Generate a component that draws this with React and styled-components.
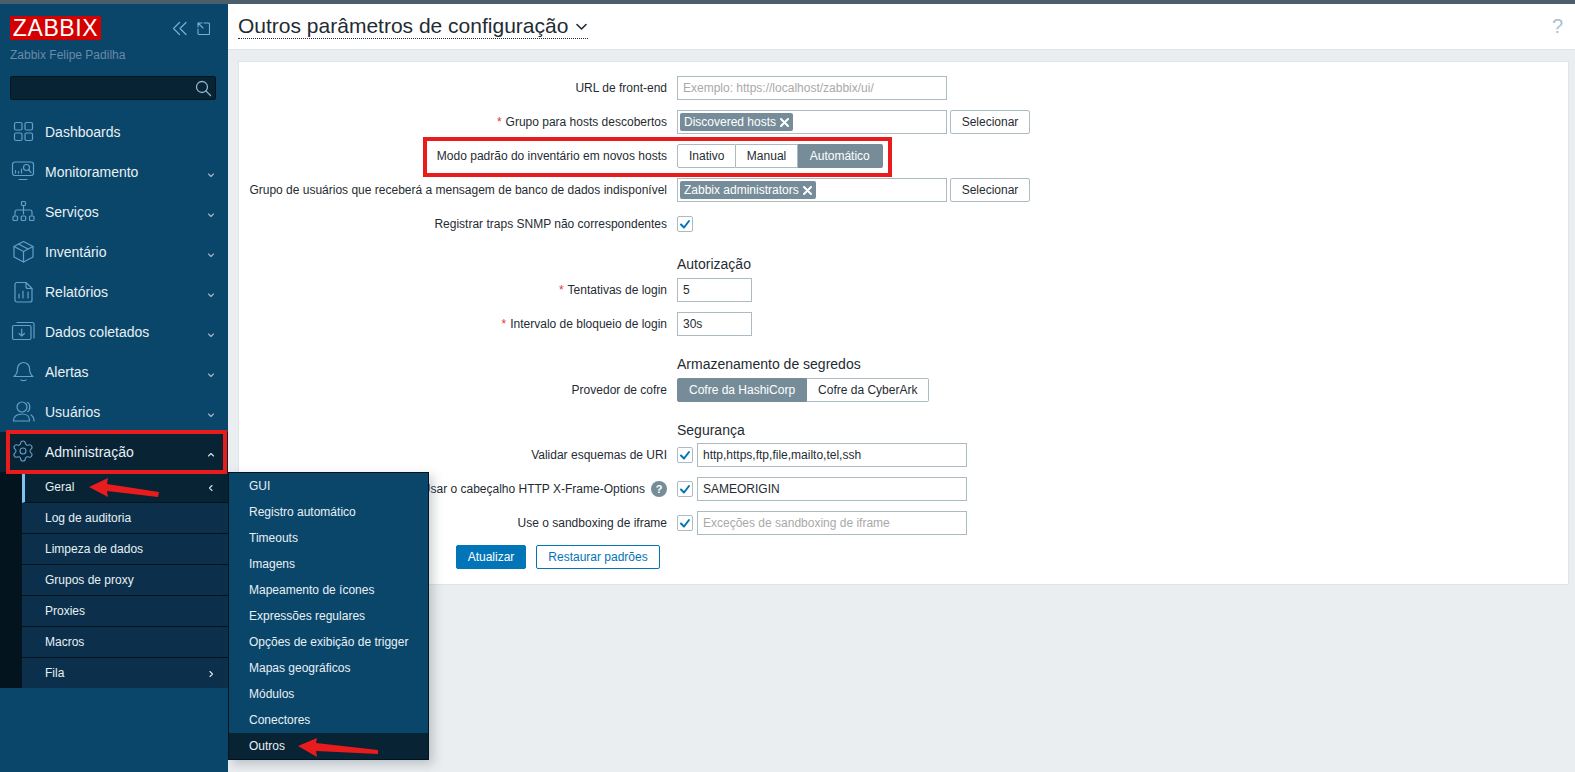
import React from 'react'
import styled, { createGlobalStyle } from 'styled-components'
import { Settings } from 'lucide-react'

const GlobalStyle = createGlobalStyle`
  html, body {
    margin: 0;
    padding: 0;
    height: 100%;
    overflow: hidden;
    background: #ebeef0;
    font-family: "Liberation Sans", Arial, sans-serif;
    font-size: 12px;
    color: #1f2c33;
  }
  * { box-sizing: border-box; }
`

const Page = styled.div`
  position: relative;
  width: 1575px;
  height: 772px;
  overflow: hidden;
  display: flex;
  flex-direction: column;
`

const TopStrip = styled.div`
  height: 4px;
  flex: none;
  background: #4b5e69;
`

const Body = styled.div`
  flex: 1;
  display: flex;
  min-height: 0;
`

const Sidebar = styled.aside`
  position: relative;
  width: 228px;
  flex: none;
  background: #0a466a;
  padding-top: 12px;
`

const BrandRow = styled.div`
  display: flex;
  align-items: center;
  justify-content: space-between;
  padding: 0 18px 0 10px;
`

const Logo = styled.div`
  width: 91px;
  height: 24px;
  background: #d40000;
  color: #fff;
  font-size: 23px;
  line-height: 25px;
  letter-spacing: 0.6px;
  text-align: center;
  overflow: hidden;
`

const BrandTools = styled.div`
  display: flex;
  align-items: center;
  gap: 10px;
  color: #6fb0dc;
`

const ServerName = styled.div`
  margin: 8px 0 0 10px;
  font-size: 12px;
  color: #6b8aa6;
`

const SearchBox = styled.div`
  display: flex;
  align-items: center;
  justify-content: flex-end;
  height: 24px;
  margin: 14px 12px 0 10px;
  padding-right: 3px;
  background: #072334;
  border: 1px solid #04141f;
  border-radius: 2px;
  color: #8fb4cf;
`

const Menu = styled.nav`
  margin-top: 12px;
`

const MenuItem = styled.div`
  position: relative;
  display: flex;
  align-items: center;
  height: 40px;
  padding-left: 45px;
  font-size: 14px;
  color: #e8f0f5;
  background: ${p => (p.$active ? '#072334' : 'transparent')};
`

const MenuIcon = styled.span`
  position: absolute;
  left: 11px;
  top: 8px;
  width: 24px;
  height: 24px;
  color: #629fcb;
`

const GearIcon = styled(Settings)`
  display: block;
  margin-top: -1px;
`

const Caret = styled.span`
  position: absolute;
  right: 12px;
  top: 50%;
  margin-top: -5px;
  width: 10px;
  height: 10px;
  color: ${p => (p.$light ? '#dbe6ee' : '#9db9cd')};
`

const SubWrap = styled.div`
  background: #04141f;
  padding-left: 22px;
`

const SubItem = styled.div`
  position: relative;
  display: flex;
  align-items: center;
  height: 31px;
  font-size: 12px;
  color: #e8f0f5;
  background: ${p => (p.$active ? '#072334' : '#0c304b')};
  border-bottom: 1px solid #04141f;
  border-left: ${p => (p.$active ? '3px solid #7fc4f0' : '0')};
  padding-left: ${p => (p.$active ? '20px' : '23px')};

  &:last-child {
    height: 30px;
    border-bottom: 0;
  }
`

const Flyout = styled.div`
  position: absolute;
  left: 228px;
  top: 472px;
  width: 201px;
  background: #0a466a;
  border: 1px solid #04141f;
  box-shadow: 4px 4px 10px rgba(40, 60, 75, 0.25);
  z-index: 3;
`

const FlyoutItem = styled.div`
  display: flex;
  align-items: center;
  height: 26px;
  padding-left: 20px;
  font-size: 12px;
  color: #e8f0f5;
  background: ${p => (p.$active ? '#072334' : 'transparent')};
`

const Main = styled.main`
  flex: 1;
  min-width: 0;
  display: flex;
  flex-direction: column;
`

const Header = styled.header`
  height: 46px;
  flex: none;
  display: flex;
  align-items: center;
  justify-content: space-between;
  padding: 0 12px 0 10px;
  background: #fff;
  border-bottom: 1px solid #dfe4e7;
`

const Title = styled.h1`
  display: flex;
  align-items: center;
  gap: 7px;
  margin: 0;
  font-size: 21px;
  font-weight: normal;
  line-height: 24px;
  color: #1f2c33;
  border-bottom: 1px dotted #1f2c33;
`

const HelpMark = styled.span`
  font-size: 20px;
  color: #a9c0cf;
`

const Card = styled.section`
  margin: 11px 6px 0 10px;
  padding: 14px 0 15px;
  background: #fff;
  border: 1px solid #dfe4e7;
`

const Row = styled.div`
  display: grid;
  grid-template-columns: 428px 1fr;
  column-gap: 10px;
  align-items: center;
  min-height: 24px;
  margin-bottom: 10px;
`

const Label = styled.label`
  display: flex;
  align-items: center;
  justify-content: flex-end;
  white-space: nowrap;
  text-align: right;
  color: #1f2c33;
`

const Star = styled.span`
  color: #e33734;
  margin-right: 4px;
`

const Control = styled.div`
  display: flex;
  align-items: center;
  gap: ${p => p.$gap ?? 3}px;
`

const Input = styled.div`
  display: flex;
  align-items: center;
  width: ${p => p.$w}px;
  height: 24px;
  padding: 0 5px;
  border: 1px solid #acbbc2;
  color: ${p => (p.$ph ? '#a9a9a9' : '#1f2c33')};
`

const TagBox = styled.div`
  display: flex;
  align-items: center;
  width: 270px;
  height: 24px;
  padding: 0 2px;
  border: 1px solid #acbbc2;
`

const Tag = styled.span`
  display: inline-flex;
  align-items: center;
  gap: 4px;
  height: 18px;
  padding: 0 4px;
  border-radius: 2px;
  background: #768d99;
  color: #fff;
`

const GhostButton = styled.button`
  width: 80px;
  height: 24px;
  padding: 0;
  font: inherit;
  color: #1f2c33;
  background: #fff;
  border: 1px solid #acbbc2;
  border-radius: 2px;
`

const Segment = styled.div`
  display: flex;
  height: 24px;
`

const SegmentItem = styled.span`
  display: flex;
  align-items: center;
  padding: 0 ${p => p.$pad ?? 11}px;
  color: ${p => (p.$on ? '#fff' : '#1f2c33')};
  background: ${p => (p.$on ? '#768d99' : '#fff')};
  border: 1px solid ${p => (p.$on ? '#768d99' : '#acbbc2')};
  border-left-width: ${p => (p.$first ? 1 : 0)}px;
  border-radius: ${p => (p.$first ? '2px 0 0 2px' : p.$last ? '0 2px 2px 0' : '0')};
`

const Check = styled.span`
  display: flex;
  align-items: center;
  justify-content: center;
  width: 16px;
  height: 16px;
  flex: none;
  border: 1px solid #acbbc2;
  border-radius: 2px;
  color: #0275b8;
  background: #fff;
`

const SectionTitle = styled.div`
  margin: 20px 0 ${p => p.$after ?? 6}px 438px;
  font-size: 14px;
  line-height: 16px;
  color: #1f2c33;
`

const HelpDot = styled.span`
  display: inline-flex;
  align-items: center;
  justify-content: center;
  width: 16px;
  height: 16px;
  margin-left: 6px;
  border-radius: 50%;
  background: #768d99;
  color: #fff;
  font-size: 11px;
  font-weight: bold;
`

const Actions = styled.div`
  display: flex;
  gap: 10px;
  margin-left: 217px;
`

const PrimaryButton = styled.button`
  width: 70px;
  height: 24px;
  padding: 0;
  font: inherit;
  color: #fff;
  background: #0275b8;
  border: 1px solid #0275b8;
  border-radius: 2px;
`

const SecondaryButton = styled.button`
  width: 124px;
  height: 24px;
  padding: 0;
  font: inherit;
  color: #0275b8;
  background: #fff;
  border: 1px solid #0275b8;
  border-radius: 2px;
`

const RedBox = styled.div`
  position: absolute;
  left: ${p => p.$x}px;
  top: ${p => p.$y}px;
  width: ${p => p.$w}px;
  height: ${p => p.$h}px;
  border: 4px solid #e81c1c;
  pointer-events: none;
  z-index: 5;
`

const ArrowMark = styled.svg`
  position: absolute;
  left: ${p => p.$x}px;
  top: ${p => p.$y}px;
  z-index: 5;
`

const Svg = ({ size = 24, vb = 24, children, sw = 1.2 }) => (
  <svg width={size} height={size} viewBox={`0 0 ${vb} ${vb}`} fill="none" stroke="currentColor" strokeWidth={sw} strokeLinecap="round" strokeLinejoin="round">
    {children}
  </svg>
)

const icons = {
  dashboards: (
    <Svg>
      <rect x="3.5" y="2.500" width="7.5" height="7.5" rx="1.5" /><rect x="14" y="2.500" width="7.5" height="7.5" rx="1.5" />
      <rect x="3.5" y="13" width="7.5" height="7.5" rx="1.5" /><rect x="14" y="13" width="7.5" height="7.5" rx="1.5" />
    </Svg>
  ),
  monitoring: (
    <Svg>
      <rect x="1.5" y="2" width="21" height="13.5" rx="2.5" />
      <path d="M8 19.500h8M4.500 13v-2.500M7.500 13v-1.500M10.500 13V9" />
      <circle cx="15.500" cy="7.500" r="3" /><path d="M17.700 9.700l2.300 2.800" />
    </Svg>
  ),
  services: (
    <Svg>
      <rect x="10.500" y="1.500" width="4" height="4" rx="1" />
      <path d="M12.500 5.500V14M4 15v-3a2 2 0 0 1 2-2h13a2 2 0 0 1 2 2v3" />
      <rect x="2" y="16" width="4.500" height="4.500" rx="1" /><rect x="10.200" y="16" width="4.500" height="4.500" rx="1" /><rect x="18.500" y="16" width="4.500" height="4.500" rx="1" />
    </Svg>
  ),
  inventory: (
    <Svg>
      <path d="M12.500 1.500l9.500 5v10.500l-9.500 5-9.500-5V6.500z" /><path d="M3 6.500l9.500 5 9.500-5M12.500 11.500V22M7.500 4l9.500 5" />
    </Svg>
  ),
  reports: (
    <Svg>
      <path d="M6 2.500h9l6 6V20a2 2 0 0 1-2 2H6a2 2 0 0 1-2-2V4.500a2 2 0 0 1 2-2z" /><path d="M15 2.500V6.500a2 2 0 0 0 2 2h4M8 18v-4M12 18v-7M17 18v-6" />
    </Svg>
  ),
  data: (
    <Svg>
      <rect x="1.500" y="5.500" width="18.500" height="14" rx="1.500" /><path d="M6 2.500h15.500a1.500 1.500 0 0 1 1.500 1.500v14M10.700 9v7M8 13.500l2.700 2.700 2.700-2.700" />
    </Svg>
  ),
  alerts: (
    <Svg>
      <path d="M3 16.500c2-1.500 3.500-3.500 3.500-8a6 6 0 0 1 12 0c0 4.500 1.500 6.500 3.500 8z" /><path d="M10 20c1.500 .8 3.500 .8 5 0" />
    </Svg>
  ),
  users: (
    <Svg>
      <circle cx="11" cy="7" r="5" />
      <path d="M2.500 21v-1c0-3.500 3.500-6 8.500-6s7.500 2.500 7.500 6v1zM16.500 2.500c3 1 3 8 0 9M20 15c2 1.200 3 3.500 3 6" />
    </Svg>
  ),
}

const CaretIcon = ({ dir = 'down' }) => {
  const d = {
    down: 'M2.500 4l2.500 2.500L7.500 4',
    up: 'M2.500 6L5 3.500 7.500 6',
    left: 'M6 2.500L3.500 5 6 7.500',
    right: 'M4 2.500L6.500 5 4 7.500',
  }[dir]
  return <Svg size={10} vb={10} sw={1.1}><path d={d} /></Svg>
}

const CheckMark = () => (
  <Svg size={12} vb={12} sw={2}><path d="M2 6.500l3 3 5-6.500" /></Svg>
)

const Cross = () => (
  <Svg size={9} vb={9} sw={2}><path d="M1 1l7 7M8 1l-7 7" /></Svg>
)

const Arrow = ({ x, y, w, h, d }) => (
  <ArrowMark $x={x} $y={y} width={w} height={h} viewBox={`0 0 ${w} ${h}`}>
    <path d={d} fill="#e81c1c" />
  </ArrowMark>
)

const menu = [
  ['dashboards', 'Dashboards', false],
  ['monitoring', 'Monitoramento', true],
  ['services', 'Serviços', true],
  ['inventory', 'Inventário', true],
  ['reports', 'Relatórios', true],
  ['data', 'Dados coletados', true],
  ['alerts', 'Alertas', true],
  ['users', 'Usuários', true],
]

const subMenu = ['Log de auditoria', 'Limpeza de dados', 'Grupos de proxy', 'Proxies', 'Macros']

const flyout = ['GUI', 'Registro automático', 'Timeouts', 'Imagens', 'Mapeamento de ícones', 'Expressões regulares', 'Opções de exibição de trigger', 'Mapas geográficos', 'Módulos', 'Conectores']

export default function App() {
  return (
    <Page>
      <GlobalStyle />
      <TopStrip />
      <Body>
        <Sidebar>
          <BrandRow>
            <Logo>ZABBIX</Logo>
            <BrandTools>
              <Svg size={15} vb={15} sw={1.2}><path d="M7.500 1.500L1.500 7.500l6 6M14 1.500L8 7.500l6 6" /></Svg>
              <Svg size={13} vb={13} sw={1.1}><path d="M7 1h4.500A1 1 0 0 1 12.500 2v9.500a1 1 0 0 1-1 1H2a1 1 0 0 1-1-1V7M1 1l5 5M1 1h4M1 1v4" /></Svg>
            </BrandTools>
          </BrandRow>
          <ServerName>Zabbix Felipe Padilha</ServerName>
          <SearchBox>
            <Svg size={18} vb={18} sw={1.3}><circle cx="8" cy="8" r="5.500" /><path d="M12 12l4.500 4.500" /></Svg>
          </SearchBox>
          <Menu>
            {menu.map(([icon, label, caret]) => (
              <MenuItem key={label}>
                <MenuIcon>{icons[icon]}</MenuIcon>
                {label}
                {caret && <Caret><CaretIcon /></Caret>}
              </MenuItem>
            ))}
            <MenuItem $active>
              <MenuIcon><GearIcon size={24} strokeWidth={1.1} /></MenuIcon>
              Administração
              <Caret $light><CaretIcon dir="up" /></Caret>
            </MenuItem>
            <SubWrap>
              <SubItem $active>
                Geral
                <Caret $light><CaretIcon dir="left" /></Caret>
              </SubItem>
              {subMenu.map(label => <SubItem key={label}>{label}</SubItem>)}
              <SubItem>
                Fila
                <Caret $light><CaretIcon dir="right" /></Caret>
              </SubItem>
            </SubWrap>
          </Menu>
        </Sidebar>
        <Main>
          <Header>
            <Title>
              Outros parâmetros de configuração
              <Svg size={13} vb={13} sw={1.6}><path d="M2 4.500l4.500 4.500 4.500-4.500" /></Svg>
            </Title>
            <HelpMark>?</HelpMark>
          </Header>
          <Card>
            <Row>
              <Label>URL de front-end</Label>
              <Control><Input $w={270} $ph>Exemplo: https://localhost/zabbix/ui/</Input></Control>
            </Row>
            <Row>
              <Label><Star>*</Star>Grupo para hosts descobertos</Label>
              <Control>
                <TagBox><Tag>Discovered hosts <Cross /></Tag></TagBox>
                <GhostButton>Selecionar</GhostButton>
              </Control>
            </Row>
            <Row>
              <Label>Modo padrão do inventário em novos hosts</Label>
              <Control>
                <Segment>
                  <SegmentItem $first>Inativo</SegmentItem>
                  <SegmentItem $pad={10.5}>Manual</SegmentItem>
                  <SegmentItem $on $last $pad={12}>Automático</SegmentItem>
                </Segment>
              </Control>
            </Row>
            <Row>
              <Label>Grupo de usuários que receberá a mensagem de banco de dados indisponível</Label>
              <Control>
                <TagBox><Tag>Zabbix administrators <Cross /></Tag></TagBox>
                <GhostButton>Selecionar</GhostButton>
              </Control>
            </Row>
            <Row>
              <Label>Registrar traps SNMP não correspondentes</Label>
              <Control><Check><CheckMark /></Check></Control>
            </Row>
            <SectionTitle>Autorização</SectionTitle>
            <Row>
              <Label><Star>*</Star>Tentativas de login</Label>
              <Control><Input $w={75}>5</Input></Control>
            </Row>
            <Row>
              <Label><Star>*</Star>Intervalo de bloqueio de login</Label>
              <Control><Input $w={75}>30s</Input></Control>
            </Row>
            <SectionTitle>Armazenamento de segredos</SectionTitle>
            <Row>
              <Label>Provedor de cofre</Label>
              <Control>
                <Segment>
                  <SegmentItem $on $first>Cofre da HashiCorp</SegmentItem>
                  <SegmentItem $last>Cofre da CyberArk</SegmentItem>
                </Segment>
              </Control>
            </Row>
            <SectionTitle $after={5}>Segurança</SectionTitle>
            <Row>
              <Label>Validar esquemas de URI</Label>
              <Control $gap={4}><Check><CheckMark /></Check><Input $w={270}>http,https,ftp,file,mailto,tel,ssh</Input></Control>
            </Row>
            <Row>
              <Label>Usar o cabeçalho HTTP X-Frame-Options<HelpDot>?</HelpDot></Label>
              <Control $gap={4}><Check><CheckMark /></Check><Input $w={270}>SAMEORIGIN</Input></Control>
            </Row>
            <Row>
              <Label>Use o sandboxing de iframe</Label>
              <Control $gap={4}><Check><CheckMark /></Check><Input $w={270} $ph>Exceções de sandboxing de iframe</Input></Control>
            </Row>
            <Actions>
              <PrimaryButton>Atualizar</PrimaryButton>
              <SecondaryButton>Restaurar padrões</SecondaryButton>
            </Actions>
          </Card>
        </Main>
      </Body>
      <Flyout>
        {flyout.map(label => <FlyoutItem key={label}>{label}</FlyoutItem>)}
        <FlyoutItem $active>Outros</FlyoutItem>
      </Flyout>
      <RedBox $x={6} $y={430} $w={221} $h={44} />
      <RedBox $x={423} $y={137} $w={469} $h={40} />
      <Arrow x={86} y={476} w={76} h={24} d="M3 11L22 2l-1 6 52 8-1 5-51-6 1 6z" />
      <Arrow x={296} y={736} w={84} h={24} d="M2 10L21 2l-1 5 62 7v4l-62-3 1 6z" />
    </Page>
  )
}
